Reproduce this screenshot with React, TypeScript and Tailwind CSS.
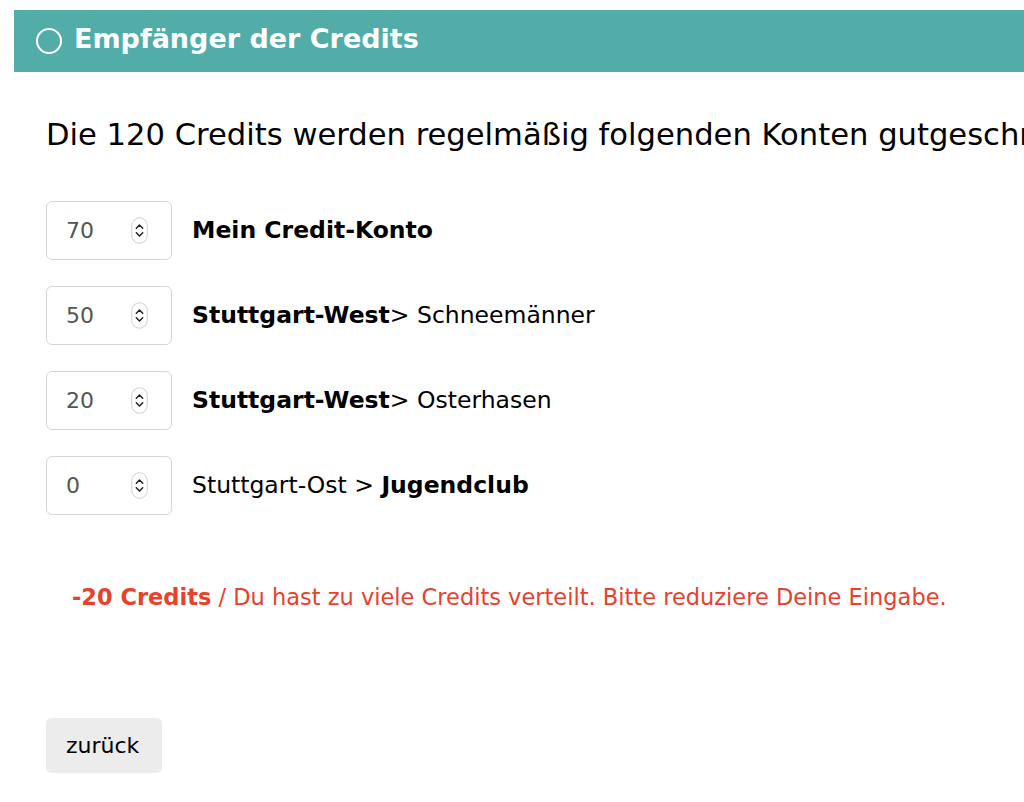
import React from "react";

function Spinner() {
  return (
    <svg width="17" height="27" viewBox="0 0 17 27" fill="none">
      <rect x="0.75" y="0.75" width="15.5" height="25.5" rx="7.75" stroke="#cfcfcf" strokeWidth="1" />
      <path d="M5.3 11.2 L8.5 8 L11.7 11.2" stroke="#222" strokeWidth="1.5" strokeLinecap="round" strokeLinejoin="round" />
      <path d="M5.3 15.8 L8.5 19 L11.7 15.8" stroke="#222" strokeWidth="1.5" strokeLinecap="round" strokeLinejoin="round" />
    </svg>
  );
}

function Row({ value, children }: { value: string; children: React.ReactNode }) {
  return (
    <div className="flex items-center">
      <div className="flex h-[59px] w-[126px] items-center justify-between rounded-[6px] border border-[#d3d6db] pl-[19px] pr-[23px]">
        <span className="text-[22px] text-[#555]">{value}</span>
        <Spinner />
      </div>
      <div className="ml-[20px] text-[23.5px] text-black">{children}</div>
    </div>
  );
}

export default function App() {
  return (
    <div className="min-h-[802px] w-[1024px] overflow-hidden bg-white pt-[10px]" style={{ fontFamily: "'DejaVu Sans', sans-serif" }}>
      <div className="ml-[14px] flex h-[62px] items-center bg-[#52ADA9] pl-[22px]">
        <div className="h-[26px] w-[26px] rounded-full border-2 border-white" />
        <span className="ml-[12px] pb-[4px] text-[27px] font-bold text-white">Empfänger der Credits</span>
      </div>
      <div className="px-[46px]">
        <p className="mt-[43px] whitespace-nowrap text-[30.6px] leading-[40px] text-black">
          Die 120 Credits werden regelmäßig folgenden Konten gutgeschrieben:
        </p>
        <div className="mt-[46px] flex flex-col gap-[26px]">
          <Row value="70">
            <span className="font-bold">Mein Credit-Konto</span>
          </Row>
          <Row value="50">
            <span className="font-bold">Stuttgart-West</span>&gt; Schneemänner
          </Row>
          <Row value="20">
            <span className="font-bold">Stuttgart-West</span>&gt; Osterhasen
          </Row>
          <Row value="0">
            Stuttgart-Ost &gt; <span className="font-bold">Jugendclub</span>
          </Row>
        </div>
        <p className="ml-[26px] mt-[66px] whitespace-nowrap text-[22.5px] leading-[32px] text-[#E8412C]">
          <span className="font-bold">-20 Credits</span> / Du hast zu viele Credits verteilt. Bitte reduziere Deine Eingabe.
        </p>
        <button
          className="mt-[105px] flex h-[55px] w-[116px] items-center rounded-[5px] bg-[#ececec] pl-[20px] text-[22px] text-black"
          style={{ fontFamily: "'DejaVu Sans', sans-serif" }}
        >
          zurück
        </button>
      </div>
    </div>
  );
}
